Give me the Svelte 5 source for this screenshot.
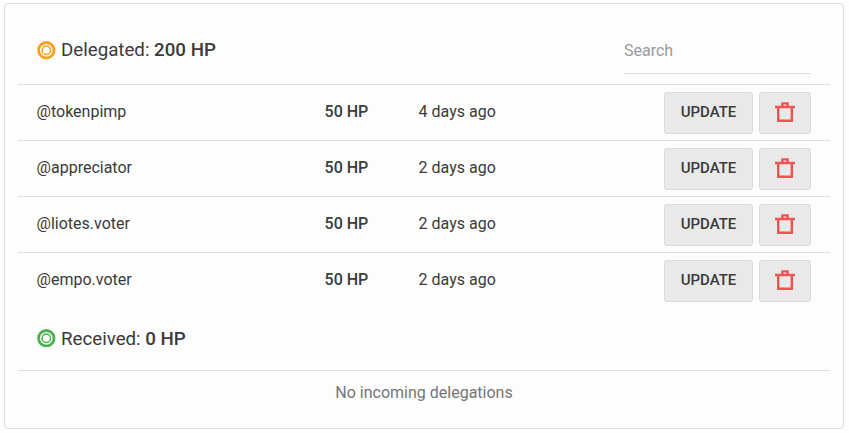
<script>
  let search = "";

  const delegations = [
    { account: "tokenpimp", amount: 50, time: "4 days ago" },
    { account: "appreciator", amount: 50, time: "2 days ago" },
    { account: "liotes.voter", amount: 50, time: "2 days ago" },
    { account: "empo.voter", amount: 50, time: "2 days ago" },
  ];

  // total of what we delegated, without the search filter
  $: total = delegations.reduce((sum, item) => sum + item.amount, 0);
  $: visible = delegations.filter((item) =>
    item.account.includes(search.toLowerCase())
  );
</script>

<main class="card">
  <div class="header">
    <h2>
      <svg class="ring orange" viewBox="0 0 20 20">
        <circle cx="10.3" cy="10.2" r="7.7" stroke-width="2.8" />
        <circle cx="10.3" cy="10.2" r="4.3" stroke-width="1.5" />
      </svg>
      <span>Delegated: <b>{total} HP</b></span>
    </h2>
    <input bind:value={search} type="text" placeholder="Search" />
  </div>

  {#each visible as item}
    <div class="row">
      <span class="account">@{item.account}</span>
      <span class="amount">{item.amount} HP</span>
      <span class="time">{item.time}</span>
      <div class="actions">
        <button class="update">UPDATE</button>
        <button class="remove" aria-label="Remove">
          <svg viewBox="0 0 20 20">
            <path d="M0 5H20M3.2 5V18.8H16.8V5M7.4 5V1.4H12.6V5" />
          </svg>
        </button>
      </div>
    </div>
  {/each}

  <div class="header received">
    <h2>
      <svg class="ring green" viewBox="0 0 20 20">
        <circle cx="10.3" cy="10.2" r="7.7" stroke-width="2.8" />
        <circle cx="10.3" cy="10.2" r="4.3" stroke-width="1.5" />
      </svg>
      <span>Received: <b>0 HP</b></span>
    </h2>
  </div>
  <p class="empty">No incoming delegations</p>
</main>

<style>
  :global(body) {
    background-color: #fefefe;
  }

  .card {
    box-sizing: border-box;
    width: 840px;
    height: 426px;
    margin: 3px 0 0 4px;
    padding: 0 13px;
    border: 1px solid #dcdcdc;
    border-radius: 4px;
    background-color: #fdfdfd;
    color: #3a3a3a;
    font-family: Roboto, sans-serif;
    font-size: 16px;
    line-height: 24px;
    overflow: hidden;
  }

  .header {
    box-sizing: border-box;
    display: flex;
    justify-content: space-between;
    height: 80px;
    padding: 32px 19px 0 18px;
  }

  h2 {
    display: flex;
    align-items: flex-start;
    gap: 5px;
    margin: 0;
    font-size: 18.72px;
    font-weight: 400;
    line-height: 28px;
  }

  b {
    font-weight: 500;
  }

  .ring {
    width: 20px;
    height: 20px;
    margin-top: 4px;
    fill: #fff;
  }

  .orange {
    stroke: #f9a01b;
  }

  .green {
    stroke: #4caf50;
  }

  .green {
    margin-top: 3px;
  }

  input {
    box-sizing: border-box;
    width: 187px;
    height: 38px;
    padding: 0 0 8px;
    border: 0;
    border-bottom: 1px solid #dcdcdc;
    background: none;
    color: inherit;
    font: inherit;
    outline: none;
  }

  input::placeholder {
    color: #9b9b9b;
    opacity: 1;
  }

  .row {
    box-sizing: border-box;
    display: flex;
    height: 56px;
    padding: 7px 19px 0 18.6px;
    border-top: 1px solid #dedede;
    line-height: 40px;
  }

  .account {
    width: 288px;
  }

  .amount {
    width: 94px;
    font-weight: 500;
  }

  .actions {
    display: flex;
    gap: 6px;
    margin-left: auto;
  }

  button {
    box-sizing: border-box;
    height: 42px;
    padding: 0;
    border: 1px solid #dadada;
    border-radius: 3px;
    background-color: #e9e9e9;
    cursor: pointer;
  }

  .update {
    width: 89px;
    padding-bottom: 2px;
    color: #3a3a3a;
    font-family: inherit;
    font-size: 15px;
    font-weight: 500;
  }

  .remove {
    display: flex;
    align-items: center;
    justify-content: center;
    width: 52px;
    padding-bottom: 2px;
  }

  .remove svg {
    width: 20px;
    height: 20px;
    fill: none;
    stroke: #ee5350;
    stroke-width: 2.4;
  }

  .received {
    height: 62px;
    padding-top: 17px;
  }

  .empty {
    margin: 0;
    padding-top: 10px;
    border-top: 1px solid #dedede;
    color: #757575;
    text-align: center;
  }
</style>
